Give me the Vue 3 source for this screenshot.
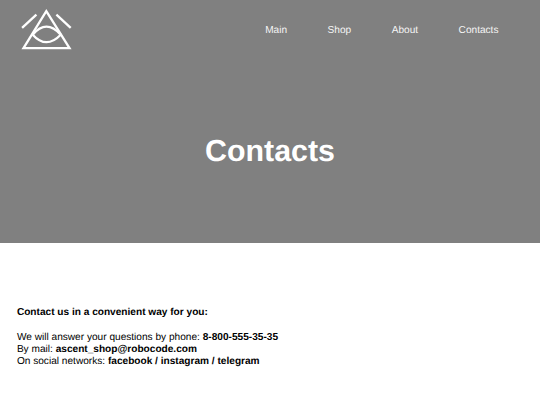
<template>
  <div class="page">
    <header class="hero">
      <div class="topbar">
        <a class="logo" href="#" aria-label="Ascent shop">
          <svg width="52" height="44" viewBox="0 0 52 44">
            <path d="M25.3 4.1 48.5 41.1H2.5Z" />
            <path d="M11.7 27.7Q25.3 11.7 39.7 27.7" />
            <path d="M11.7 27.7Q25.3 42.7 39.7 27.7" />
            <path d="M1.1 20.9 15.4 7.7" />
            <path d="M35.4 7.7 49.7 20.9" />
          </svg>
        </a>
        <nav class="menu">
          <a v-for="item in menu" :key="item" href="#">{{ item }}</a>
        </nav>
      </div>
      <h1>Contacts</h1>
    </header>

    <main class="contacts">
      <p class="lead">Contact us in a convenient way for you:</p>
      <p v-for="row in rows" :key="row.label">
        {{ row.label }} <b>{{ row.value }}</b>
      </p>
    </main>
  </div>
</template>

<script setup>
const menu = ['Main', 'Shop', 'About', 'Contacts']

const rows = [
  { label: 'We will answer your questions by phone:', value: '8-800-555-35-35' },
  { label: 'By mail:', value: 'ascent_shop@robocode.com' },
  { label: 'On social networks:', value: 'facebook / instagram / telegram' }
]
</script>

<style>
body {
  background: #fff;
}
</style>

<style scoped>
.page {
  font-family: "Liberation Sans", Arial, sans-serif;
  font-size: 10.125px;
  color: #000;
  text-rendering: geometricPrecision;
}

.hero {
  height: 243px;
  background: #808080;
  color: #fff;
}

.topbar {
  display: flex;
  align-items: center;
  justify-content: space-between;
  height: 59px;
  padding: 0 41.5px 0 21px;
}

.logo {
  display: flex;
  padding-bottom: 2px;
}

.logo svg {
  fill: none;
  stroke: #fff;
  stroke-width: 2.3;
}

.menu {
  display: flex;
  gap: 40.5px;
  padding-top: 2px;
}

.menu a {
  color: #f5f5f5;
  text-decoration: none;
}

h1 {
  margin: 0;
  padding-top: 75px;
  font-size: 30.375px;
  line-height: 36px;
  text-align: center;
}

.contacts {
  padding: 64px 16.875px 0;
  line-height: 12.2px;
}

.contacts p {
  margin: 0;
}

.contacts .lead {
  margin-bottom: 12.6px;
  font-weight: bold;
}
</style>
